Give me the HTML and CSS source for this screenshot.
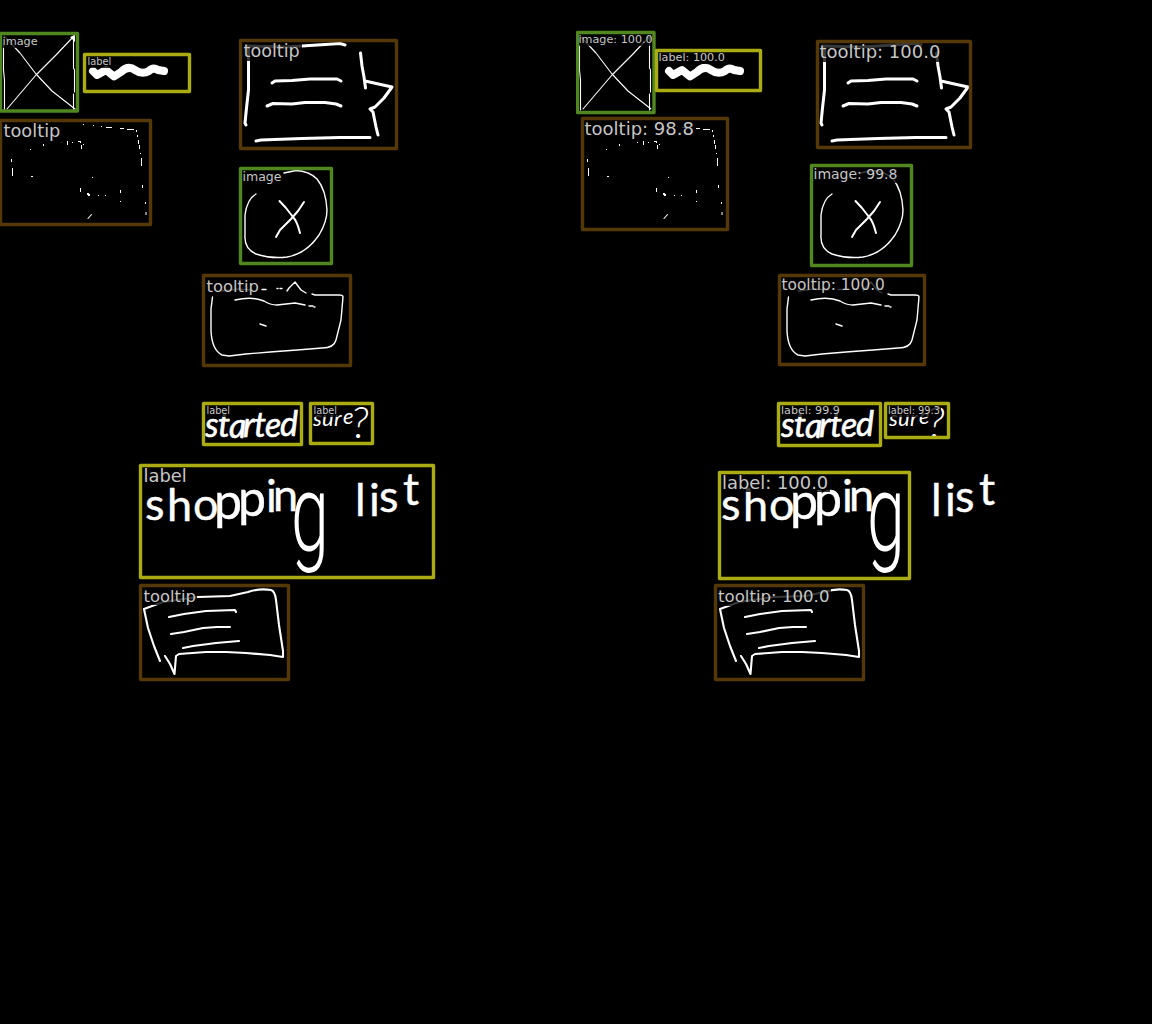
FILE: index.html
```html
<!DOCTYPE html>
<html lang="en">
<head>
<meta charset="utf-8">
<title>Sketch element detection</title>
<link rel="stylesheet" href="styles.css">
</head>
<body>
<main class="comparison">
  <svg class="panel" viewBox="0 0 576 1024" width="576" height="1024">
    <defs>
      <g id="sketch">
        <!-- crossed picture placeholder -->
        <g class="ink hair">
          <path d="M4 36L20 53L36 74L52 91L75 109M74 36L56 55L36 75L7 109"/>
          <path d="M3.5 45V70L4.500 80V110M73.500 36V68L74.500 70V92M73.500 94V110"/>
        </g>
        <path class="dot" d="M70 37l5-2v7z"/>
        <!-- scribbled line -->
        <path class="ink marker" d="M93 71L97 75L106 70L114 76.500L121 72Q128 65 135 70Q142 75 149 71Q153 67 158 70L164 71"/>
        <!-- faint tooltip outline -->
        <path class="dust" d="M83 124.500h1M93 125.500h1M101 126.500h1M106 127.500h6M120 128.500h4M127 129.500h7M136.500 130v2M137.500 135v2M138.500 140v4M139.500 145v4M140.500 153v1M141.500 158v8M142.500 185v3M145.500 202v2M146 212v3M11.500 159v3M12.500 168v8M30 149.500h1M43.500 144v2M31 176.500h2M61 142.500h1M67.500 141v4M72 142.500h1M78 141.500h3M80.500 141v2M81.500 145v4M83 144.500h1M92 177.500h1M80.500 188v4M98 195.500h1M105 195.500h1M120.500 190v3M120 201.500h1"/>
        <path class="dot" d="M87 193h2v1h1v2h-2v-1h-1z"/>
        <path class="ink hair" d="M88 218.500L91.500 214.500"/>
        <!-- speech bubble pointing right -->
        <g class="ink bold">
          <path d="M247 46L285 47L302 46L325 44.500L340 43.500L345 45"/>
          <path d="M248.500 48V90L246.500 108L245 123L246 125"/>
          <path d="M272 83L275 81L292 80.500L310 79H337L341 81"/>
          <path d="M267 106L273 103.500L292 104L305 102.500H325L336 104L341 106"/>
          <path d="M256 141L261 140L302 138.500L340 137.500H370"/>
          <path d="M360.500 53L362 66L364 77L365.500 88M365 81L392 87L384 98L375 107L370 109L373 112L376 127L378 135"/>
        </g>
        <!-- circled cross -->
        <g class="ink fine">
          <path d="M256 194Q247 199 245 215V235Q244 249 256 254Q271 259 287 257Q306 254 319 235Q327 222 327 210Q326 190 317 179Q309 171 296 170.500L284 173"/>
          <path class="pen" d="M279.500 201L286 208L293 217Q297 221 300 233M304 202L298 211L291 219L280 230L276 237"/>
        </g>
        <!-- rounded card with pointer -->
        <g class="ink fine">
          <path d="M212.500 297L211 309V331Q212 350 222 355L229 356L246 354L270 352L297 350L322 348Q334 348 336 340L341 320L343 297Q343 295 339 295H315L312 294"/>
          <path d="M235 300Q252 296 264 301Q270 305 277 305L295 303L305 305M309 306h4M314 307h1M260 324L263 325L266 326"/>
          <path d="M287 291L289 288L295 282L301 290L306 293M262 289.500h4M277 288.500h1M280 288.500h2M222 291L238 289L252 290"/>
        </g>
        <!-- handwritten words -->
        <text class="hand hand-small" x="205 218 229 243 254 265 280" y="437 437 438 437 437 437 436">started</text>
        <text class="hand hand-thin" x="313 322 334 343" y="426 426 426 424">sure<tspan class="mark" x="351" y="438">?</tspan></text>
        <text class="hand hand-large" x="145 167 193 214 238 266 273" y="520 521 520 519 516 512 511">sho<tspan class="long">pp</tspan>in</text>
        <text class="hand hand-tall" transform="translate(291 550) scale(1.1 1.75)">g</text>
        <text class="hand hand-large" x="355 369 379 403" y="516 516 512 505">list</text>
        <!-- speech bubble pointing down -->
        <g class="ink medium">
          <path d="M160 661L154 646L148 628L144 609L163 602L198 597L230 596L248 592Q260 588 271 590Q275 591 276 600L279 625L283 651V657L270 655L246 653L226 652H206L179 654L176 656L174.500 674L170 664L165 656"/>
          <path d="M169 617L184 614L206 611L235 610L236 612M171 634L184 632L203 628L217 627H230M183 648L193 646L216 643L239 641"/>
        </g>
      </g>
    </defs>

    <use href="#sketch"/>
    <g class="plates">
      <rect x="2" y="35" width="37" height="13"/>
      <rect x="86" y="57" width="26" height="11"/>
      <rect x="2" y="122" width="60" height="21"/>
      <rect x="242" y="42" width="60" height="19"/>
      <rect x="242" y="170" width="41" height="15"/>
      <rect x="205" y="277" width="56" height="18"/>
      <rect x="205" y="405" width="26" height="12"/>
      <rect x="312" y="405" width="26" height="12"/>
      <rect x="142" y="467" width="46" height="18"/>
      <rect x="142" y="587" width="55" height="18"/>
    </g>
    <g class="boxes">
      <rect class="image" x=".5" y="33.500" width="77" height="77.500"/>
      <rect class="label" x="84.500" y="54.500" width="105" height="37"/>
      <rect class="tooltip" x=".5" y="120.500" width="150" height="104"/>
      <rect class="tooltip" x="240.500" y="40.500" width="156" height="108"/>
      <rect class="image" x="240.500" y="168.500" width="91" height="95"/>
      <rect class="tooltip" x="203.500" y="275.500" width="147" height="90"/>
      <rect class="label" x="203.500" y="403.500" width="98" height="41"/>
      <rect class="label" x="310.500" y="403.500" width="62" height="40"/>
      <rect class="label" x="140.500" y="465.500" width="293" height="112"/>
      <rect class="tooltip" x="140.500" y="585.500" width="148" height="94"/>
    </g>
    <g class="captions">
      <text x="2.500" y="44.500" font-size="11.300">image</text>
      <text x="87.500" y="65" font-size="9.800">label</text>
      <text x="3.500" y="137" font-size="17.800">tooltip</text>
      <text x="243.500" y="57" font-size="17.600">tooltip</text>
      <text x="242.500" y="181" font-size="12.500">image</text>
      <text x="206.500" y="292" font-size="16.400">tooltip</text>
      <text x="206.500" y="414" font-size="9.700">label</text>
      <text x="313.500" y="414" font-size="9.700">label</text>
      <text x="143.500" y="482" font-size="17.900">label</text>
      <text x="143.500" y="602" font-size="16.400">tooltip</text>
    </g>
  </svg>

  <svg class="panel" viewBox="0 0 576 1024" width="576" height="1024">
    <use href="#sketch"/>
    <g class="plates">
      <rect x="2" y="34" width="76" height="12"/>
      <rect x="82" y="52" width="69" height="12"/>
      <rect x="8" y="120" width="112" height="20"/>
      <rect x="243" y="43" width="123" height="19"/>
      <rect x="237" y="167" width="86" height="16"/>
      <rect x="205" y="277" width="106" height="17"/>
      <rect x="204" y="405" width="62" height="12"/>
      <rect x="311" y="405" width="54" height="12"/>
      <rect x="145" y="474" width="109" height="18"/>
      <rect x="141" y="587" width="114" height="19"/>
    </g>
    <g class="boxes">
      <rect class="image" x="1.500" y="32.500" width="76.500" height="80"/>
      <rect class="label" x="80.500" y="50.500" width="104" height="40"/>
      <rect class="tooltip" x="6.500" y="118.500" width="145" height="111"/>
      <rect class="tooltip" x="241.500" y="41.500" width="153" height="106"/>
      <rect class="image" x="235.500" y="165.500" width="100" height="100"/>
      <rect class="tooltip" x="203.500" y="275.500" width="145" height="89"/>
      <rect class="label" x="202.500" y="403.500" width="102" height="42"/>
      <rect class="label" x="309.500" y="403.500" width="63" height="34"/>
      <rect class="label" x="143.500" y="472.500" width="190" height="106"/>
      <rect class="tooltip" x="139.500" y="585.500" width="148" height="94"/>
    </g>
    <g class="captions">
      <text x="2.500" y="43" font-size="11.200">image: 100.0</text>
      <text x="82.500" y="61" font-size="11.200">label: 100.0</text>
      <text x="8.500" y="135" font-size="18">tooltip: 98.8</text>
      <text x="243.500" y="58" font-size="18">tooltip: 100.0</text>
      <text x="237.500" y="179" font-size="14">image: 99.8</text>
      <text x="205.500" y="290" font-size="15.400">tooltip: 100.0</text>
      <text x="205" y="414" font-size="11.100">label: 99.9</text>
      <text x="312" y="414" font-size="9.800">label: 99.3</text>
      <text x="146" y="489" font-size="17.900">label: 100.0</text>
      <text x="142" y="602" font-size="16.600">tooltip: 100.0</text>
    </g>
  </svg>
</main>
</body>
</html>
```
FILE: styles.css
```css
body {
  margin: 0;
  background: #000;
}

.comparison {
  display: flex;
  width: 1152px;
  height: 1024px;
  overflow: hidden;
}

.panel {
  flex: none;
  display: block;
}

.ink {
  fill: none;
  stroke: #fff;
  stroke-linecap: round;
  stroke-linejoin: round;
}

.hair { stroke-width: 1.1; }
.fine { stroke-width: 1.4; }
.pen { stroke-width: 2; }
.medium { stroke-width: 2.1; }
.bold { stroke-width: 3; }
.marker { stroke-width: 8; }

.dust {
  fill: none;
  stroke: #fff;
  stroke-width: 1;
}

.dot { fill: #fff; }

.hand {
  font-family: Lato, "Open Sans", sans-serif;
  fill: #fff;
  stroke: #fff;
  stroke-linejoin: round;
}

.hand-large {
  font-size: 45px;
  stroke-width: 0.4px;
}

.hand-large .long { font-size: 50px; }

.hand-tall {
  font-family: Roboto, sans-serif;
  font-size: 62px;
  font-weight: 300;
  stroke: none;
}

.hand-small {
  font-size: 34px;
  font-style: italic;
  stroke-width: 0.6px;
}

.hand-thin {
  font-size: 22px;
  font-style: italic;
  stroke-width: 0;
}

.hand-thin .mark {
  font-size: 44px;
  font-weight: 300;
}

.plates { fill: rgba(0, 0, 0, 0.78); }

.boxes {
  fill: none;
  stroke-width: 3.4;
  stroke-linejoin: round;
}

.image { stroke: #50871e; }
.label { stroke: #abab13; }
.tooltip { stroke: #543907; }

.captions {
  font-family: "DejaVu Sans", sans-serif;
  fill: #c6c6c6;
}
```
